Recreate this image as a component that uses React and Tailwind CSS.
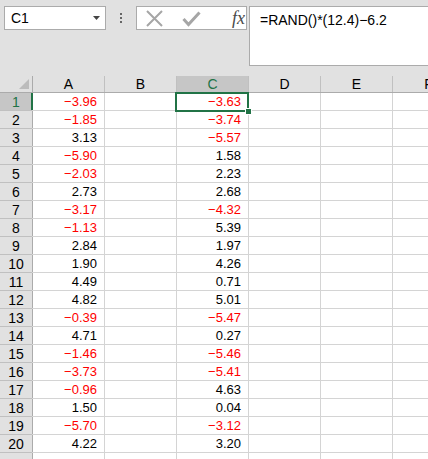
import React from "react";

const A = ["-3.96","-1.85","3.13","-5.90","-2.03","2.73","-3.17","-1.13","2.84","1.90","4.49","4.82","-0.39","4.71","-1.46","-3.73","-0.96","1.50","-5.70","4.22"];
const C = ["-3.63","-3.74","-5.57","1.58","2.23","2.68","-4.32","5.39","1.97","4.26","0.71","5.01","-5.47","0.27","-5.46","-5.41","4.63","0.04","-3.12","3.20"];

function Val({ v }) {
  if (!v) return null;
  const neg = v.startsWith("-");
  return (
    <span className={neg ? "text-[#ff0000]" : "text-black"}>
      {neg ? "\u2212" + v.slice(1) : v}
    </span>
  );
}

function Cell({ v, selected }) {
  return (
    <div className="relative w-[72px] shrink-0 h-full border-r border-[#d4d4d4] flex items-center justify-end pr-[7px] pt-[1px]">
      <Val v={v} />
      {selected && (
        <div className="absolute left-[-2px] top-[-1px] right-[-1px] bottom-[-2px] border-2 border-[#217346] z-10">
          <div className="absolute right-[-5px] bottom-[-5px] w-[7px] h-[7px] bg-[#217346] border border-white" />
        </div>
      )}
    </div>
  );
}

export default function App() {
  const cols = ["A", "B", "C", "D", "E", "F"];
  return (
    <div
      className="w-[428px] h-[459px] overflow-hidden bg-white text-[13px] text-black"
      style={{ fontFamily: '"Liberation Sans", Arial, sans-serif' }}
    >
      {/* toolbar */}
      <div className="h-[76px] bg-[#e1e1e1] flex items-start pt-[6px] pl-[4px]">
        <div className="w-[102px] h-[24px] bg-white border border-[#ababab] flex items-center pl-[6px] pr-[5px] justify-between">
          <span className="leading-none text-[14px]">C1</span>
          <svg width="7" height="4" viewBox="0 0 7 4">
            <path d="M0 0 H7 L3.5 4 Z" fill="#444" />
          </svg>
        </div>
        <div className="w-[30px] h-[24px] flex flex-col items-center justify-center gap-[2px]">
          <div className="w-[2px] h-[2px] bg-[#666]" />
          <div className="w-[2px] h-[2px] bg-[#666]" />
          <div className="w-[2px] h-[2px] bg-[#666]" />
        </div>
        <div className="w-[111px] h-[24px] bg-white border border-[#ababab] flex items-center relative">
          <svg className="absolute left-[8px] top-[3px]" width="19" height="17" viewBox="0 0 19 17">
            <path d="M2 1 L17 16 M17 1 L2 16" stroke="#a6a6a6" strokeWidth="2" fill="none" />
          </svg>
          <svg className="absolute left-[45px] top-[3px]" width="19" height="17" viewBox="0 0 19 17">
            <path d="M1.5 9 L6.5 14.5 L17.5 2.5" stroke="#a6a6a6" strokeWidth="3" fill="none" />
          </svg>
          <span
            className="absolute left-[95px] top-[0px] italic text-[18px] leading-[22px] text-[#4a4a4a]"
            style={{ fontFamily: '"Liberation Serif", "Times New Roman", serif' }}
          >
            fx
          </span>
        </div>
        <div className="ml-[2px] flex-1 h-[60px] bg-white border border-r-0 border-[#ababab] pl-[10px] pt-[4px] leading-[18px] text-[14px]">
          =RAND()*(12.4)−6.2
        </div>
      </div>

      {/* column headers */}
      <div className="flex h-[17px] bg-[#e1e1e1] border-b border-[#ababab]">
        <div className="relative w-[33px] shrink-0 h-full border-r border-[#ababab]">
          <svg className="absolute right-[3px] bottom-[3px]" width="10" height="10" viewBox="0 0 10 10">
            <path d="M10 0 L10 10 L0 10 Z" fill="#bcbcbc" />
          </svg>
        </div>
        {cols.map((c) => (
          <div
            key={c}
            className={
              "w-[72px] shrink-0 h-full border-r border-[#c0c0c0] flex items-center justify-center leading-none text-[14px] " +
              (c === "C" ? "bg-[#c6c6c6] text-[#217346]" : "")
            }
          >
            {c}
          </div>
        ))}
      </div>

      {/* rows */}
      {Array.from({ length: 21 }).map((_, i) => (
        <div key={i} className="flex h-[18px] border-b border-[#d4d4d4]">
          <div
            className={
              "relative w-[33px] shrink-0 h-full flex items-center justify-center pt-[1px] border-r border-[#ababab] text-[14px] " +
              (i === 0 ? "bg-[#c6c6c6] text-[#217346]" : "bg-[#e1e1e1]")
            }
          >
            {i < 20 ? i + 1 : ""}
            {i === 0 && <div className="absolute right-[-1px] top-0 bottom-0 w-[2px] bg-[#217346]" />}
            <div className="absolute left-0 right-0 bottom-[-1px] h-px bg-[#c0c0c0]" />
          </div>
          <Cell v={A[i]} />
          <Cell v={""} />
          <Cell v={C[i]} selected={i === 0} />
          <Cell v={""} />
          <Cell v={""} />
          <Cell v={""} />
        </div>
      ))}
    </div>
  );
}
